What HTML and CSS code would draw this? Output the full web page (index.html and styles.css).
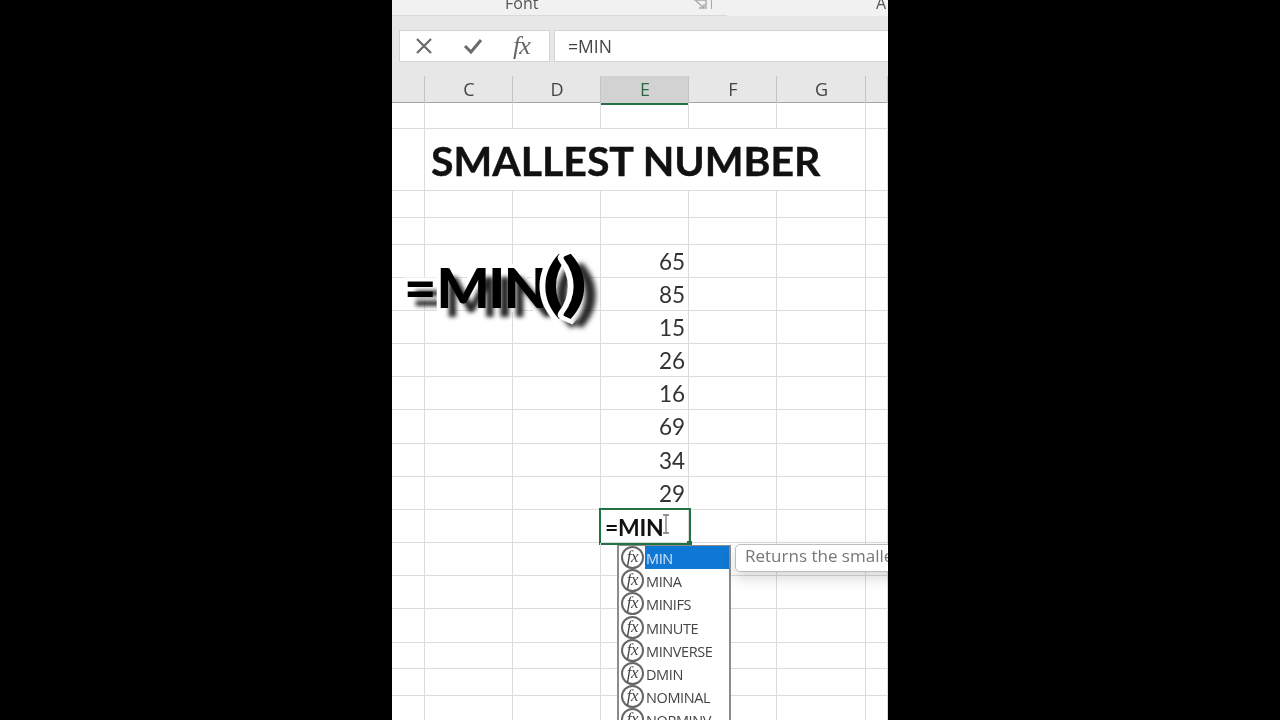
FILE: index.html
```html
<!DOCTYPE html>
<html lang="en">

<head>
  <meta charset="UTF-8" />
  <title>Smallest number</title>
  <link rel="stylesheet" href="styles.css">
</head>

<body>
  <div id="frame">
    <div class="ribbon">
      <span class="group-name">Font</span>
      <svg class="launcher" width="14" height="10" viewBox="0 0 14 10">
        <path d="M1 0h12M13 0v9M3 1l8 7M6 8h5V4" fill="none" stroke="#a8a8a8" stroke-width="1.4" />
      </svg>
      <span class="group-sep"></span>
      <span class="group-next">A</span>
    </div>

    <div class="formula-bar">
      <div class="fx-buttons">
        <svg width="18" height="18" viewBox="0 0 18 18">
          <path d="M2 2l14 14M16 2L2 16" fill="none" stroke="#6a6a6a" stroke-width="2.2" />
        </svg>
        <svg width="20" height="18" viewBox="0 0 20 18">
          <path d="M2 9l6 6L18 3" fill="none" stroke="#6a6a6a" stroke-width="3" />
        </svg>
        <span class="fx-label">fx</span>
      </div>
      <div class="formula-input">=MIN</div>
    </div>

    <div class="col-headers">
      <div></div>
      <div>C</div>
      <div>D</div>
      <div class="selected">E</div>
      <div>F</div>
      <div>G</div>
      <div></div>
    </div>

    <div id="sheet">
      <div class="cell"></div><div class="cell"></div><div class="cell"></div><div class="cell"></div><div class="cell"></div><div class="cell"></div><div class="cell"></div>
      <div class="cell"></div><div class="cell title">SMALLEST NUMBER</div><div class="cell"></div>
      <div class="cell"></div><div class="cell"></div><div class="cell"></div><div class="cell"></div><div class="cell"></div><div class="cell"></div><div class="cell"></div>
      <div class="cell"></div><div class="cell"></div><div class="cell"></div><div class="cell"></div><div class="cell"></div><div class="cell"></div><div class="cell"></div>
      <div class="cell"></div><div class="cell"></div><div class="cell"></div><div class="cell num">65</div><div class="cell"></div><div class="cell"></div><div class="cell"></div>
      <div class="cell"></div><div class="cell"></div><div class="cell"></div><div class="cell num">85</div><div class="cell"></div><div class="cell"></div><div class="cell"></div>
      <div class="cell"></div><div class="cell"></div><div class="cell"></div><div class="cell num">15</div><div class="cell"></div><div class="cell"></div><div class="cell"></div>
      <div class="cell"></div><div class="cell"></div><div class="cell"></div><div class="cell num">26</div><div class="cell"></div><div class="cell"></div><div class="cell"></div>
      <div class="cell"></div><div class="cell"></div><div class="cell"></div><div class="cell num">16</div><div class="cell"></div><div class="cell"></div><div class="cell"></div>
      <div class="cell"></div><div class="cell"></div><div class="cell"></div><div class="cell num">69</div><div class="cell"></div><div class="cell"></div><div class="cell"></div>
      <div class="cell"></div><div class="cell"></div><div class="cell"></div><div class="cell num">34</div><div class="cell"></div><div class="cell"></div><div class="cell"></div>
      <div class="cell"></div><div class="cell"></div><div class="cell"></div><div class="cell num">29</div><div class="cell"></div><div class="cell"></div><div class="cell"></div>
      <div class="cell"></div><div class="cell"></div><div class="cell"></div><div class="cell editing">=MIN</div><div class="cell"></div><div class="cell"></div><div class="cell"></div>
      <div class="cell"></div><div class="cell"></div><div class="cell"></div><div class="cell"></div><div class="cell"></div><div class="cell"></div><div class="cell"></div>
      <div class="cell"></div><div class="cell"></div><div class="cell"></div><div class="cell"></div><div class="cell"></div><div class="cell"></div><div class="cell"></div>
      <div class="cell"></div><div class="cell"></div><div class="cell"></div><div class="cell"></div><div class="cell"></div><div class="cell"></div><div class="cell"></div>
      <div class="cell"></div><div class="cell"></div><div class="cell"></div><div class="cell"></div><div class="cell"></div><div class="cell"></div><div class="cell"></div>
      <div class="cell"></div><div class="cell"></div><div class="cell"></div><div class="cell"></div><div class="cell"></div><div class="cell"></div><div class="cell"></div>
      <div class="cell"></div><div class="cell"></div><div class="cell"></div><div class="cell"></div><div class="cell"></div><div class="cell"></div><div class="cell"></div>
    </div>

    <!-- things floating over the sheet -->
    <div class="caption"><span class="eq">=</span>MIN<span class="paren open">(</span><span class="paren close">)</span></div>

    <svg class="ibeam" width="8" height="20" viewBox="0 0 8 20">
      <path d="M1 1h6M4 1v18M1 19h6" fill="none" stroke="#777" stroke-width="1.3" />
    </svg>
    <span class="fill-handle"></span>

    <ul class="suggest">
      <li class="active"><span class="fn-icon">fx</span><span class="fn-name">MIN</span></li>
      <li><span class="fn-icon">fx</span><span class="fn-name">MINA</span></li>
      <li><span class="fn-icon">fx</span><span class="fn-name">MINIFS</span></li>
      <li><span class="fn-icon">fx</span><span class="fn-name">MINUTE</span></li>
      <li><span class="fn-icon">fx</span><span class="fn-name">MINVERSE</span></li>
      <li><span class="fn-icon">fx</span><span class="fn-name">DMIN</span></li>
      <li><span class="fn-icon">fx</span><span class="fn-name">NOMINAL</span></li>
      <li><span class="fn-icon">fx</span><span class="fn-name">NORMINV</span></li>
    </ul>

    <div class="tip">Returns the smallest number in a set of values</div>
  </div>
</body>

</html>
```

FILE: styles.css
```css
* {
  box-sizing: border-box;
}

html,
body {
  height: 720px;
  overflow: hidden;
}

body {
  margin: 0;
  background: #000;
  display: flex;
  justify-content: center;
  font-family: 'Open Sans', sans-serif;
}

#frame {
  position: relative;
  width: 496px;
  height: 720px;
  overflow: hidden;
  background: #fff;
  filter: blur(0.45px);
}

.ribbon {
  height: 16px;
  display: flex;
  background: #f1f1f1;
  overflow: hidden;
  color: #555;
  font-size: 16px;
  line-height: 10px;
  background-image: linear-gradient(#d9d9d9, #d9d9d9);
  background-size: 335px 1px;
  background-position: left bottom;
  background-repeat: no-repeat;
}

.group-name {
  margin-left: 113px;
  margin-top: -2px;
  width: 40px;
  height: 10px;
}

.launcher {
  margin-left: 148px;
}

.group-sep {
  width: 1px;
  height: 9px;
  margin-left: 4px;
  background: #aaa;
}

.group-next {
  margin-left: 164px;
  margin-top: -2px;
}

.formula-bar {
  height: 60px;
  padding: 14px 0 14px 7px;
  display: flex;
  gap: 4px;
  background: #e7e7e7;
}

.fx-buttons {
  width: 151px;
  display: flex;
  align-items: center;
  gap: 30px;
  padding-left: 15px;
  background: #fff;
  border: 1px solid #d4d4d4;
}

.fx-label {
  font-family: 'Liberation Serif', serif;
  font-style: italic;
  font-size: 26px;
  color: #666;
  letter-spacing: -1px;
}

.formula-input {
  flex: 1;
  background: #fff;
  border: 1px solid #d4d4d4;
  border-right: none;
  padding-left: 13px;
  line-height: 30px;
  font-size: 17.5px;
  color: #444;
}

.col-headers {
  height: 27px;
  display: grid;
  grid-template-columns: 33px 88px 88px 88px 88px 89px 22px;
  background: #e7e7e7;
  border-bottom: 1px solid #a4a4a4;
}

.col-headers div {
  border-right: 1px solid #c4c4c4;
  padding-left: 1px;
  text-align: center;
  line-height: 27px;
  font-size: 18px;
  color: #444;
}

.col-headers .selected {
  background: #d2d2d2;
  border-bottom: 2px solid #217346;
  color: #2c6a45;
}

#sheet {
  display: grid;
  grid-template-columns: 33px 88px 88px 88px 88px 89px 22px;
  grid-template-rows: 26px 62px 27px 27px repeat(5, 33px) 34px repeat(5, 33px) 34px 26px 27px 30px;
}

.cell {
  border-right: 1px solid #dcdcdc;
  border-bottom: 1px solid #dcdcdc;
}

.title {
  grid-column: span 5;
  padding-left: 6px;
  font-family: Lato, sans-serif;
  font-weight: 700;
  font-size: 41px;
  line-height: 64px;
  color: #111;
  -webkit-text-stroke: 0.4px #111;
  white-space: nowrap;
}

.num {
  padding-right: 3px;
  text-align: right;
  font-family: Lato, sans-serif;
  font-size: 22.5px;
  line-height: 34px;
  color: #333;
}

.editing {
  padding-left: 4px;
  font-family: Lato, sans-serif;
  font-weight: 700;
  font-size: 23px;
  line-height: 34px;
  letter-spacing: -0.3px;
  color: #111;
  outline: 2px solid #217346;
  outline-offset: 0;
}

.caption {
  position: absolute;
  left: 12px;
  top: 252px;
  font-family: Lato, sans-serif;
  font-weight: 900;
  font-size: 56px;
  line-height: 68px;
  letter-spacing: -1.5px;
  color: #000;
  white-space: nowrap;
  -webkit-text-stroke: 8px #fff;
  paint-order: stroke fill;
  text-shadow: 8px 9px 4px rgba(0, 0, 0, 0.85);
}

.eq {
  letter-spacing: 0;
}

.paren {
  display: inline-block;
  width: 19px;
  font-size: 68px;
  font-weight: 700;
  line-height: 60px;
  transform: scaleX(1.45);
}

.ibeam {
  position: absolute;
  left: 270px;
  top: 514px;
}

.fill-handle {
  position: absolute;
  left: 295px;
  top: 541px;
  width: 5px;
  height: 5px;
  background: #217346;
}

.suggest {
  position: absolute;
  left: 225px;
  top: 545px;
  width: 114px;
  height: 190px;
  margin: 0;
  padding: 0;
  list-style: none;
  background: #fff;
  border: 2px solid #8c8c8c;
  border-top-width: 1px;
}

.suggest li {
  height: 23.2px;
  display: flex;
  align-items: center;
  gap: 1px;
  padding-left: 2px;
  font-size: 14.5px;
  letter-spacing: -0.4px;
  color: #444;
}

.fn-icon {
  width: 23px;
  height: 23px;
  flex: none;
  border: 2px solid #666;
  border-radius: 50%;
  text-align: center;
  font-family: 'Liberation Serif', serif;
  font-style: italic;
  font-size: 17px;
  line-height: 18px;
  letter-spacing: -0.5px;
  color: #444;
}

.fn-name {
  flex: 1;
  height: 23px;
  line-height: 25px;
  padding-left: 1px;
}

.suggest .active .fn-name {
  background: #0f78d4;
  color: #cfe3f6;
}

.tip {
  position: absolute;
  left: 343px;
  top: 544px;
  height: 28px;
  padding: 0 9px;
  background: #fff;
  border: 1px solid #bdbdbd;
  border-radius: 5px;
  box-shadow: 0 6px 14px rgba(0, 0, 0, 0.16);
  font-size: 17px;
  line-height: 22px;
  color: #777;
  white-space: nowrap;
}
```
